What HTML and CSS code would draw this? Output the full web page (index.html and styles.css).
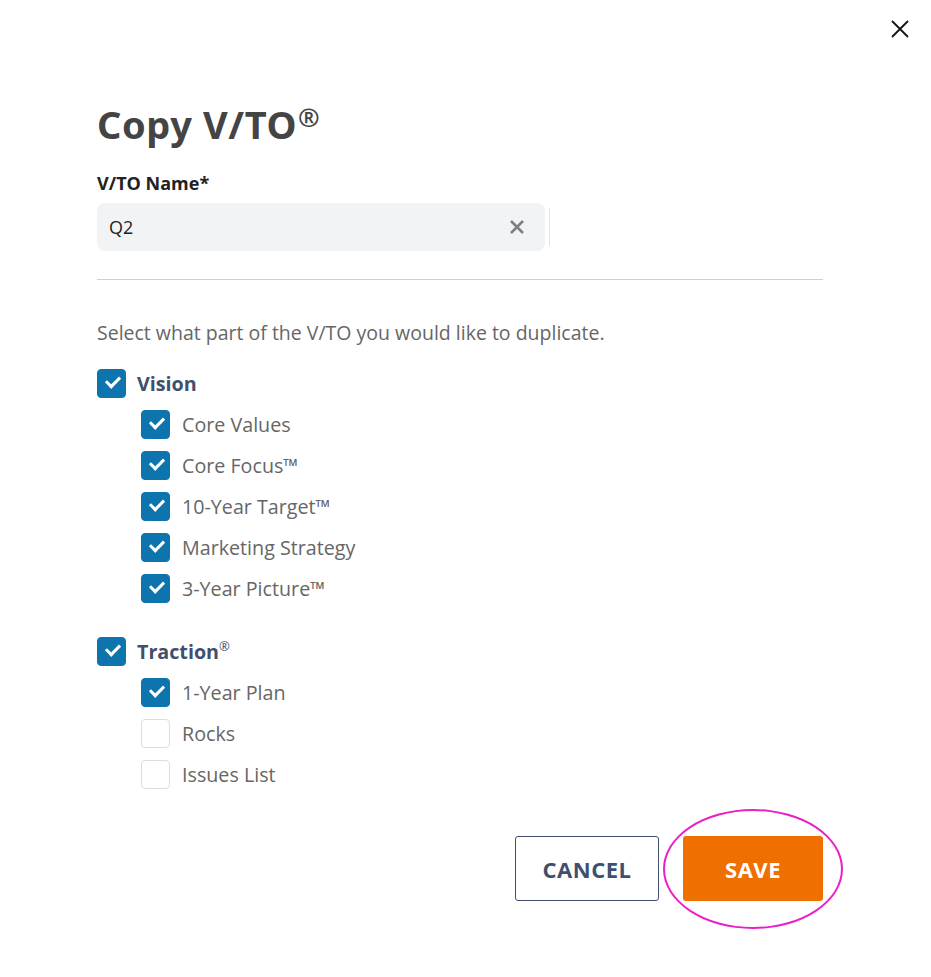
FILE: index.html
```html
<!DOCTYPE html>
<html lang="en">
<head>
  <meta charset="UTF-8">
  <meta name="viewport" content="width=device-width, initial-scale=1.0">
  <title>Copy V/TO</title>
  <link rel="stylesheet" href="styles.css">
</head>
<body>
  <div class="modal">
    <button class="close-btn" aria-label="Close">
      <svg width="18" height="18" viewBox="0 0 18 18"><path d="M1 1 L17 17 M17 1 L1 17" stroke="#111" stroke-width="1.8" fill="none"/></svg>
    </button>

    <h1 class="title">Copy V/TO<sup>®</sup></h1>

    <label class="field-label" for="vto-name">V/TO Name*</label>
    <div class="field-row">
      <div class="field">
        <input type="text" id="vto-name" value="Q2">
        <span class="clear">
          <svg width="16" height="16" viewBox="0 0 16 16"><path d="M2 2 L14 14 M14 2 L2 14" stroke="#7b7f87" stroke-width="2.6" fill="none"/></svg>
        </span>
      </div>
      <span class="caret-line"></span>
    </div>

    <hr class="divider">

    <p class="intro">Select what part of the V/TO you would like to duplicate.</p>

    <!-- Vision -->
    <div class="group">
      <div class="check parent">
        <span class="box on"></span>
        <span class="text">Vision</span>
      </div>
      <div class="check child"><span class="box on"></span><span class="text">Core Values</span></div>
      <div class="check child"><span class="box on"></span><span class="text">Core Focus™</span></div>
      <div class="check child"><span class="box on"></span><span class="text">10-Year Target™</span></div>
      <div class="check child"><span class="box on"></span><span class="text">Marketing Strategy</span></div>
      <div class="check child"><span class="box on"></span><span class="text">3-Year Picture™</span></div>
    </div>

    <!-- Traction -->
    <div class="group">
      <div class="check parent">
        <span class="box on"></span>
        <span class="text">Traction<sup>®</sup></span>
      </div>
      <div class="check child"><span class="box on"></span><span class="text">1-Year Plan</span></div>
      <div class="check child"><span class="box"></span><span class="text">Rocks</span></div>
      <div class="check child"><span class="box"></span><span class="text">Issues List</span></div>
    </div>

    <div class="actions">
      <button class="btn cancel">Cancel</button>
      <button class="btn save">Save</button>
      <span class="highlight"></span>
    </div>
  </div>
</body>
</html>
```

FILE: styles.css
```css
/* Page */
body {
  margin: 0;
  background: #fff;
  font-family: 'Open Sans', 'Noto Sans', sans-serif;
  color: #333;
}

.modal {
  position: relative;
  width: 931px;
  min-height: 977px;
  box-sizing: border-box;
  padding: 96px 108px 0 97px;
}

.close-btn {
  position: absolute;
  top: 20px;
  right: 22px;
  padding: 0;
  border: none;
  background: none;
  cursor: pointer;
}

/* Title */
.title {
  font-family: 'Noto Sans', 'Open Sans', sans-serif;
  font-weight: 700;
  font-size: 38px;
  line-height: 56px;
  color: #444;
  margin: 0 0 14px;
  letter-spacing: 0.6px;
}

.title sup {
  font-size: 26px;
  font-weight: 600;
  vertical-align: 0;
  position: relative;
  top: -12px;
  margin-left: 1px;
}

/* Name field */
.field-label {
  display: block;
  font-weight: 700;
  font-size: 18px;
  line-height: 24px;
  color: #222;
  margin-bottom: 8px;
}

.field-row {
  display: flex;
  align-items: center;
  gap: 4px;
}

.field {
  display: flex;
  align-items: center;
  width: 448px;
  height: 48px;
  box-sizing: border-box;
  padding: 0 20px 0 12px;
  background: #f2f3f5;
  border-radius: 8px;
}

.field input {
  flex: 1;
  border: none;
  background: transparent;
  font-family: inherit;
  font-size: 18px;
  color: #222;
  outline: none;
  padding: 0;
}

.clear {
  display: flex;
}

.caret-line {
  width: 1px;
  height: 38px;
  background: #dde3ec;
}

.divider {
  border: none;
  border-top: 1px solid #cfcfcf;
  margin: 28px 0 0;
}

.intro {
  font-size: 19.5px;
  line-height: 26px;
  color: #666;
  margin: 40px 0 23px;
}

/* Checkbox list */
.group {
  display: flex;
  flex-direction: column;
  gap: 12px;
  margin-bottom: 34px;
}

.check {
  display: flex;
  align-items: center;
  gap: 12px;
  height: 29px;
}

.check.parent {
  gap: 11px;
}

.check.child {
  padding-left: 44px;
}

.box {
  width: 29px;
  height: 29px;
  box-sizing: border-box;
  border: 1px solid #dcdee2;
  border-radius: 4px;
  background: #fff;
  flex-shrink: 0;
  position: relative;
}

.box.on {
  background: #0e74ad;
  border-color: #0e74ad;
}

.box.on::after {
  content: "";
  position: absolute;
  left: 8px;
  top: 6px;
  width: 11px;
  height: 6px;
  border-left: 3px solid #fff;
  border-bottom: 3px solid #fff;
  transform: rotate(-45deg);
}

.check .text {
  font-size: 19.7px;
  color: #666;
}

.check.parent .text {
  font-weight: 700;
  color: #3f4f6d;
}

.check.parent sup {
  font-size: 13px;
  font-weight: 400;
  vertical-align: 0;
  position: relative;
  top: -8px;
}

/* Buttons */
.actions {
  position: relative;
  display: flex;
  justify-content: flex-end;
  gap: 24px;
  margin-top: 47px;
}

.btn {
  height: 65px;
  border-radius: 3px;
  font-family: inherit;
  font-weight: 700;
  font-size: 22px;
  text-transform: uppercase;
  letter-spacing: 0.5px;
  cursor: pointer;
}

.cancel {
  width: 144px;
  background: #fff;
  border: 1px solid #3f4f6d;
  color: #3f4f6d;
}

.save {
  width: 140px;
  background: #ef6f00;
  border: none;
  color: #fff;
}

.highlight {
  position: absolute;
  right: -20px;
  top: -27px;
  width: 176px;
  height: 116px;
  border: 2px solid #ec1fc6;
  border-radius: 50%;
  pointer-events: none;
}
```
